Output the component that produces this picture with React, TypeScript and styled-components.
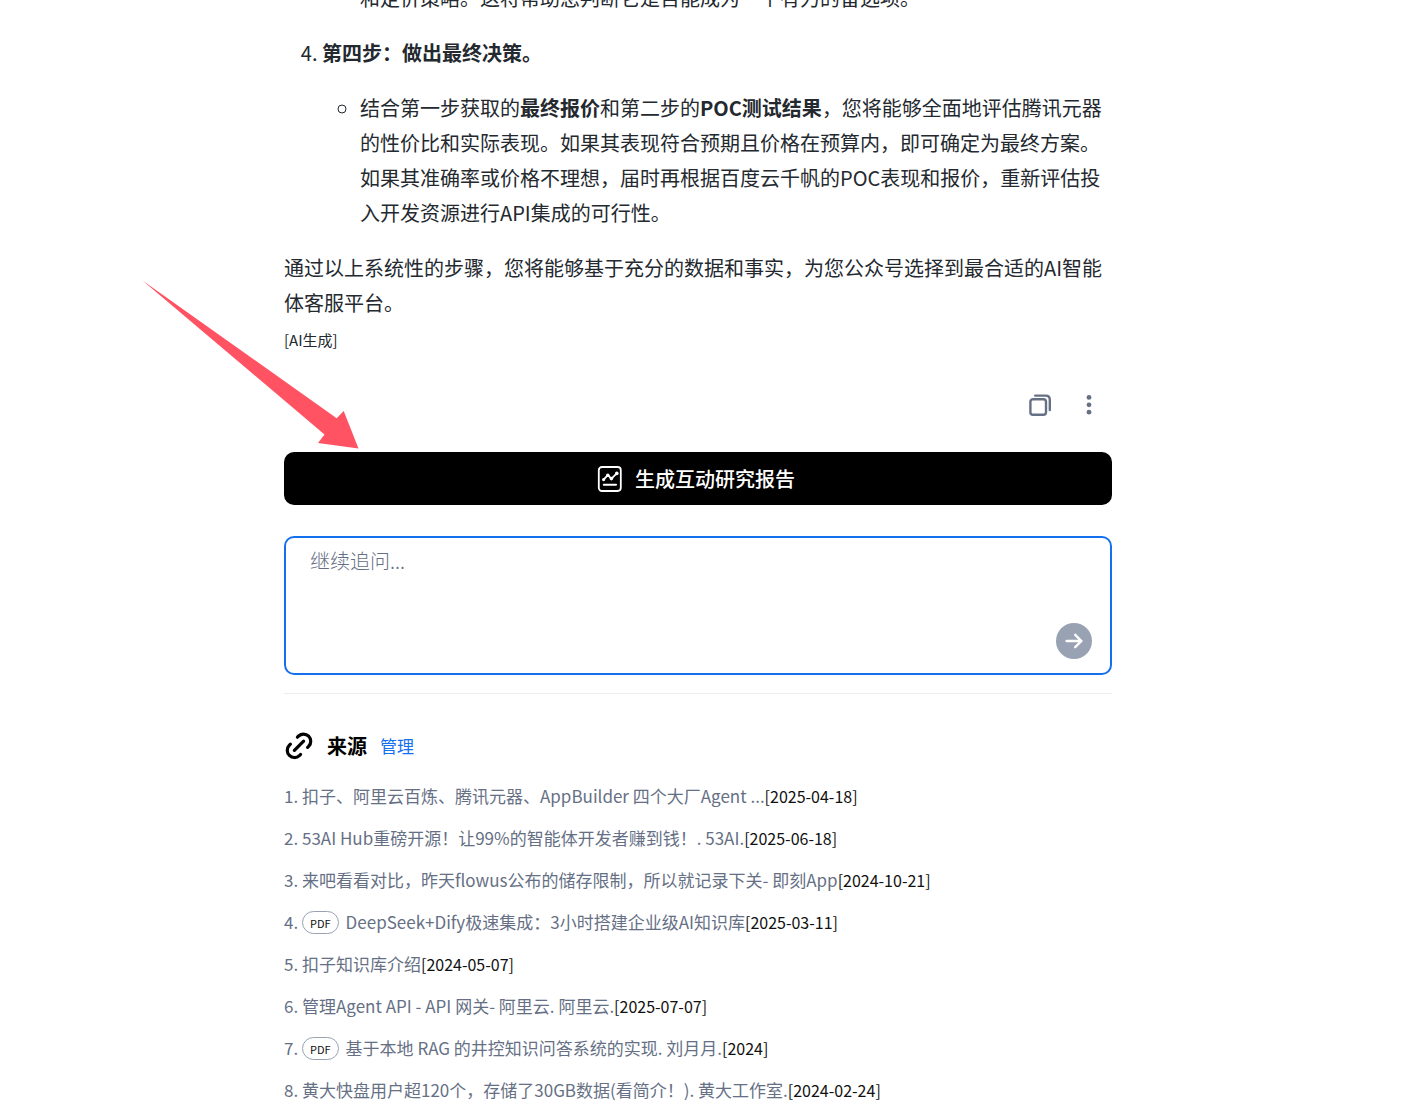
import React, { useState } from "react";
import styled, { createGlobalStyle } from "styled-components";

const GlobalStyle = createGlobalStyle`
  *, *::before, *::after { box-sizing: border-box; }
  body {
    margin: 0;
    background: #fff;
    color: #24292f;
    font-family: "Noto Sans CJK SC", "Noto Sans", sans-serif;
    font-size: 20px;
    line-height: 35px;
  }
  button, textarea { font-family: inherit; }
`;

const Page = styled.div`
  display: flex;
  justify-content: center;
  min-height: 100vh;
  padding-right: 21px;
  overflow: hidden;
`;

const Column = styled.main`
  position: relative;
  width: 100%;
  max-width: 828px;
`;

/* The answer is scrolled: its first visible line is cut by the window's top. */
const Answer = styled.article`
  margin-top: -20px;

  p { margin: 0; }
  strong { font-weight: 700; }
`;

const Steps = styled.ol`
  margin: 0 0 20px;
  padding-left: 38px;
`;

const Step = styled.li<{ $continued?: boolean }>`
  list-style-type: ${({ $continued }) => ($continued ? "none" : "decimal")};
`;

const Details = styled.ul<{ $continued?: boolean }>`
  margin: ${({ $continued }) => ($continued ? "0 0 20px" : "20px 0")};
  padding-left: 38px;
  list-style-type: ${({ $continued }) => ($continued ? "none" : "circle")};
`;

const Note = styled.small`
  display: block;
  margin-top: 7px;
  font-size: 15px;
  line-height: 26px;
`;

const Actions = styled.div`
  display: flex;
  justify-content: flex-end;
  gap: 20px;
  margin: 37px 9px 32px 0;
`;

const IconButton = styled.button`
  display: grid;
  place-items: center;
  width: 29px;
  height: 30px;
  padding: 0;
  border: 0;
  background: none;
  color: #667085;
  cursor: pointer;
`;

const ReportButton = styled.button`
  display: flex;
  align-items: center;
  justify-content: center;
  gap: 12px;
  width: 100%;
  height: 53px;
  padding: 0 4px 0 0;
  border: 0;
  border-radius: 10px;
  background: #000;
  color: #fff;
  font-size: 20px;
  font-weight: 500;
  cursor: pointer;
`;

const AskForm = styled.form`
  display: flex;
  align-items: flex-end;
  height: 139px;
  margin: 31px 0 18px;
  padding: 8px 18px 14px 24px;
  border: 2px solid #1570ef;
  border-radius: 10px;
`;

const AskInput = styled.textarea`
  flex: 1;
  align-self: stretch;
  padding: 0;
  border: 0;
  outline: 0;
  resize: none;
  background: none;
  color: #24292f;
  font-size: 20px;
  font-weight: 300;
  line-height: 30px;

  &::placeholder { color: #667085; opacity: 1; }
`;

const SendButton = styled.button`
  display: grid;
  place-items: center;
  width: 36px;
  height: 36px;
  padding: 0;
  border: 0;
  border-radius: 50%;
  background: #98a2b3;
  color: #fff;
  cursor: pointer;
`;

const Sources = styled.section`
  padding-top: 34px;
  border-top: 1px solid #eaecf0;
`;

const SourcesHeader = styled.header`
  display: flex;
  align-items: center;
  gap: 13px;
  color: #000;

  h2 { margin: 0; font-size: 20px; font-weight: 700; line-height: 35px; }
`;

const ManageLink = styled.a`
  color: #1570ef;
  font-size: 17px;
  text-decoration: none;
`;

const SourceList = styled.ol`
  display: flex;
  flex-direction: column;
  gap: 16px;
  margin: 20px 0 0;
  padding: 0 0 8px;
  list-style: none;
`;

const SourceRow = styled.li`
  display: flex;
  align-items: center;
  color: #667085;
  font-size: 17px;
  line-height: 26px;
  white-space: pre;
`;

const SourceLink = styled.a`
  color: inherit;
  text-decoration: none;
`;

const PdfTag = styled.span`
  height: 23px;
  margin-right: 7px;
  padding: 0 7px;
  border: 1px solid #98a2b3;
  border-radius: 12px;
  color: #101010;
  font-size: 11px;
  line-height: 22px;
`;

const SourceDate = styled.time`
  color: #101010;
  font-size: 16px;
`;

const Pointer = styled.svg`
  position: absolute;
  top: 280px;
  left: -142px;
  pointer-events: none;
`;

type Source = { title: string; date: string; pdf?: boolean };

const sources: Source[] = [
  { title: "扣子、阿里云百炼、腾讯元器、AppBuilder 四个大厂Agent ...", date: "2025-04-18" },
  { title: "53AI Hub重磅开源！让99%的智能体开发者赚到钱！. 53AI.", date: "2025-06-18" },
  { title: "来吧看看对比，昨天flowus公布的储存限制，所以就记录下关- 即刻App", date: "2024-10-21" },
  { title: "DeepSeek+Dify极速集成：3小时搭建企业级AI知识库", date: "2025-03-11", pdf: true },
  { title: "扣子知识库介绍", date: "2024-05-07" },
  { title: "管理Agent API - API 网关- 阿里云. 阿里云.", date: "2025-07-07" },
  { title: "基于本地 RAG 的井控知识问答系统的实现. 刘月月.", date: "2024", pdf: true },
  { title: "黄大快盘用户超120个，存储了30GB数据(看简介！). 黄大工作室.", date: "2024-02-24" },
];

const CopyIcon = () => (
  <svg width="24" height="24" viewBox="0 0 24 24" fill="none" stroke="currentColor" strokeWidth="2.4" strokeLinecap="round">
    <rect x="2.4" y="6.2" width="15.6" height="15.6" rx="2.6" />
    <path d="M7.2 2.6H17.6Q21.8 2.6 21.8 6.8V17" />
  </svg>
);

const MoreIcon = () => (
  <svg width="24" height="24" viewBox="0 0 24 24" fill="currentColor">
    <circle cx="12" cy="4.4" r="2.4" />
    <circle cx="12" cy="11.8" r="2.4" />
    <circle cx="12" cy="19.2" r="2.4" />
  </svg>
);

const ReportIcon = () => (
  <svg width="26" height="26" viewBox="0 0 26 26" fill="none" stroke="currentColor" strokeLinecap="round" strokeLinejoin="round">
    <rect x="1.8" y="1" width="22" height="24" rx="3.2" strokeWidth="1.8" />
    <path d="M6.6 13.6L10.8 9.2L14.4 12.6L19.8 7.4" strokeWidth="1.8" />
    <path d="M6.8 18.8H19" strokeWidth="2" />
    <g fill="currentColor" stroke="none">
      <circle cx="6.6" cy="13.6" r="1.6" />
      <circle cx="10.8" cy="9.2" r="1.8" />
      <circle cx="14.4" cy="12.6" r="1.8" />
      <circle cx="19.8" cy="7.4" r="1.8" />
    </g>
  </svg>
);

const ArrowIcon = () => (
  <svg width="20" height="20" viewBox="0 0 20 20" fill="none" stroke="currentColor" strokeWidth="2.4" strokeLinecap="round" strokeLinejoin="round">
    <path d="M2.6 10H17.4M11.2 3.8L17.4 10L11.2 16.2" />
  </svg>
);

const LinkIcon = () => (
  <svg width="30" height="30" viewBox="0 0 30 30" fill="none" stroke="currentColor" strokeWidth="3.2" strokeLinecap="round">
    <path d="M10.4 19.4L19.6 10.2" />
    <path d="M13.4 6.2L14.6 5C17.4 2.4 21.8 2.4 24.6 5.2C27.4 8 27.4 12.4 24.8 15.2L23.6 16.4" />
    <path d="M6.4 13.2L5.2 14.4C2.6 17.2 2.6 21.6 5.4 24.4C8.2 27.2 12.6 27.2 15.4 24.6L16.6 23.4" />
  </svg>
);

export default function App() {
  const [question, setQuestion] = useState("");

  return (
    <>
      <GlobalStyle />
      <Page>
        <Column>
          <Answer>
            <Steps start={3}>
              <Step $continued>
                <Details $continued>
                  <li>和定价策略。这将帮助您判断它是否能成为一个有力的备选项。</li>
                </Details>
              </Step>
              <Step>
                <strong>第四步：做出最终决策。</strong>
                <Details>
                  <li>
                    结合第一步获取的<strong>最终报价</strong>和第二步的<strong>POC测试结果</strong>，您将能够全面地评估腾讯元器的性价比和实际表现。如果其表现符合预期且价格在预算内，即可确定为最终方案。如果其准确率或价格不理想，届时再根据百度云千帆的POC表现和报价，重新评估投入开发资源进行API集成的可行性。
                  </li>
                </Details>
              </Step>
            </Steps>
            <p>通过以上系统性的步骤，您将能够基于充分的数据和事实，为您公众号选择到最合适的AI智能体客服平台。</p>
            <Note>[AI生成]</Note>
          </Answer>

          <Actions>
            <IconButton type="button" aria-label="复制"><CopyIcon /></IconButton>
            <IconButton type="button" aria-label="更多"><MoreIcon /></IconButton>
          </Actions>

          <ReportButton type="button">
            <ReportIcon />
            生成互动研究报告
          </ReportButton>

          <AskForm onSubmit={(e) => e.preventDefault()}>
            <AskInput
              aria-label="继续追问"
              placeholder="继续追问..."
              value={question}
              onChange={(e) => setQuestion(e.target.value)}
            />
            <SendButton type="submit" aria-label="发送"><ArrowIcon /></SendButton>
          </AskForm>

          <Sources>
            <SourcesHeader>
              <LinkIcon />
              <h2>来源</h2>
              <ManageLink href="#manage">管理</ManageLink>
            </SourcesHeader>
            <SourceList>
              {sources.map((source, index) => (
                <SourceRow key={source.title}>
                  <span>{index + 1}. </span>
                  {source.pdf && <PdfTag>PDF</PdfTag>}
                  <SourceLink href={`#source-${index + 1}`}>{source.title}</SourceLink>
                  <SourceDate>[{source.date}]</SourceDate>
                </SourceRow>
              ))}
            </SourceList>
          </Sources>

          <Pointer width="220" height="172" viewBox="0 0 220 172" aria-hidden="true">
            <path d="M0.5 0.5L194.7 138.3L201.7 131L216.5 168.5L176 163L182.5 154.5Z" fill="#ff5262" />
          </Pointer>
        </Column>
      </Page>
    </>
  );
}
